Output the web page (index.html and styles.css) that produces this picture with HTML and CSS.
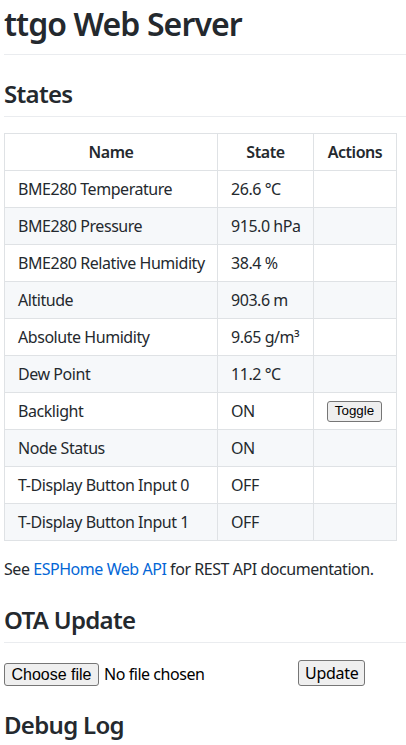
FILE: index.html
```html
<!DOCTYPE html>
<html lang="en">
<head>
<meta charset="utf-8">
<title>ttgo Web Server</title>
<link rel="stylesheet" href="styles.css">
</head>
<body>
<article class="page">
  <h1 class="title">ttgo Web Server</h1>
  <h2 class="section">States</h2>
  <table class="states">
    <colgroup>
      <col class="col-name">
      <col class="col-state">
      <col class="col-actions">
    </colgroup>
    <thead>
      <tr><th>Name</th><th>State</th><th>Actions</th></tr>
    </thead>
    <tbody>
      <tr><td>BME280 Temperature</td><td>26.6 °C</td><td></td></tr>
      <tr><td>BME280 Pressure</td><td>915.0 hPa</td><td></td></tr>
      <tr><td>BME280 Relative Humidity</td><td>38.4 %</td><td></td></tr>
      <tr><td>Altitude</td><td>903.6 m</td><td></td></tr>
      <tr><td>Absolute Humidity</td><td>9.65 g/m³</td><td></td></tr>
      <tr><td>Dew Point</td><td>11.2 °C</td><td></td></tr>
      <tr><td>Backlight</td><td>ON</td><td><button class="btn-toggle">Toggle</button></td></tr>
      <tr><td>Node Status</td><td>ON</td><td></td></tr>
      <tr><td>T-Display Button Input 0</td><td>OFF</td><td></td></tr>
      <tr><td>T-Display Button Input 1</td><td>OFF</td><td></td></tr>
    </tbody>
  </table>
  <p class="note">See <a class="link" href="#">ESPHome Web API</a> for REST API documentation.</p>
  <h2 class="section">OTA Update</h2>
  <form class="ota">
    <div class="file-input">
      <button type="button" class="btn-file">Choose file</button>
      <span class="file-name">No file chosen</span>
    </div>
    <button type="button" class="btn-update">Update</button>
  </form>
  <h2 class="section">Debug Log</h2>
</article>
</body>
</html>
```

FILE: styles.css
```css
html {
  background: #ffffff;
}
body {
  margin: 4px 0 0 4px;
  font-family: "Noto Sans", "Open Sans", sans-serif;
  font-size: 16px;
  line-height: 1.5;
  letter-spacing: -0.45px;
  color: #24292e;
}
.page {
  display: block;
}
.title {
  margin: 0 0 16px;
  font-size: 32px;
  line-height: 40px;
  font-weight: 600;
  letter-spacing: -0.9px;
  padding-bottom: 9.6px;
  border-bottom: 1px solid #eaecef;
}
.section {
  margin: 24px 0 16px;
  font-size: 24px;
  line-height: 30px;
  font-weight: 600;
  letter-spacing: -0.7px;
  padding-bottom: 7.2px;
  border-bottom: 1px solid #eaecef;
}
.states {
  border-collapse: collapse;
  border-spacing: 0;
  table-layout: fixed;
  width: 392px;
}
.col-name { width: 213px; }
.col-state { width: 96px; }
.col-actions { width: 83px; }
.states th,
.states td {
  border: 1px solid #dfe2e5;
  padding: 6px 13px;
  height: 24px;
  white-space: nowrap;
  overflow: hidden;
  vertical-align: middle;
}
.states th {
  font-weight: 600;
  text-align: center;
}
.states td {
  text-align: left;
}
.states tbody tr:nth-child(2n) {
  background: #f6f8fa;
}
.btn-toggle {
  display: block;
  font-family: "Liberation Sans", Arial, sans-serif;
  font-size: 13.33px;
  line-height: 16px;
  letter-spacing: 0;
  color: #000000;
  background: #efefef;
  border: 1px solid #767676;
  border-radius: 3px;
  padding: 1px 6px;
  margin: 2px 0 1px;
  height: 21px;
  width: 55px;
}
.note {
  margin: 16px 0 0;
  line-height: 24px;
}
.link {
  color: #0366d6;
  text-decoration: none;
}
.ota {
  display: flex;
  align-items: flex-end;
  gap: 4px;
  margin: 13px 0 0;
  height: 27px;
}
.file-input {
  display: flex;
  align-items: center;
  width: 290px;
  gap: 5px;
}
.btn-file {
  font-family: "Liberation Sans", Arial, sans-serif;
  font-size: 16px;
  line-height: 19px;
  letter-spacing: 0;
  color: #000000;
  background: #efefef;
  border: 1px solid #767676;
  border-radius: 3px;
  padding: 1px 6px;
  margin: 0;
  height: 23px;
  width: 95px;
}
.file-name {
  font-size: 16px;
  line-height: 23px;
  color: #000000;
  white-space: nowrap;
}
.btn-update {
  font-family: "Noto Sans", "Open Sans", sans-serif;
  font-size: 16px;
  line-height: 20px;
  letter-spacing: -0.3px;
  color: #000000;
  background: #efefef;
  border: 1px solid #767676;
  border-radius: 3px;
  padding: 2px 6px;
  margin: 0;
  height: 26px;
  width: 67px;
}
```
